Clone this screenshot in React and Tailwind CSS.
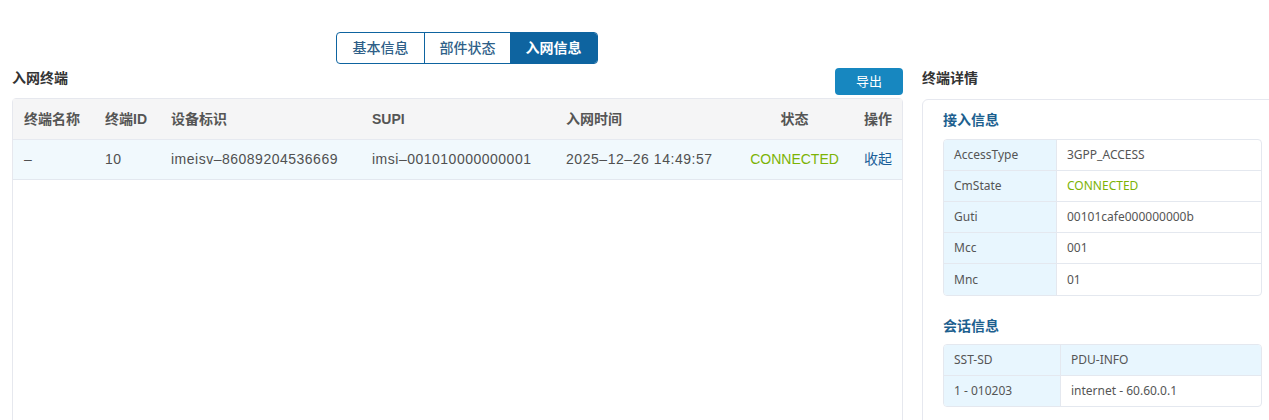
const cols = 'grid grid-cols-[81px_66px_201px_194px_182px_115px_52px]';

const accessInfo = [
  ['AccessType', '3GPP_ACCESS'],
  ['CmState', 'CONNECTED'],
  ['Guti', '00101cafe000000000b'],
  ['Mcc', '001'],
  ['Mnc', '01'],
];

function Tabs() {
  const tabs = ['基本信息', '部件状态', '入网信息'];
  return (
    <div className="flex h-8 ml-[336px] w-fit rounded border border-[#0e64a0] overflow-hidden">
      {tabs.map((t, i) => (
        <div
          key={t}
          className={`flex items-center justify-center text-[14px] ${i === 0 ? 'w-[87px]' : i === 1 ? 'w-[86px] border-l border-[#0e64a0]' : 'w-[87px]'} ${
            i === 2 ? 'bg-[#0e64a0] text-white font-bold' : 'text-[#2f5f88] font-medium'
          }`}
        >
          {t}
        </div>
      ))}
    </div>
  );
}

function TerminalTable() {
  return (
    <div className="h-[340px] rounded-t border border-[#e6e8ee] bg-white">
      <div className={`${cols} h-[41px] items-center bg-[#f5f5f6] border-b border-[#e6e9f0] text-[14px] font-semibold text-[#555]`}>
        <div className="pl-[11px]">终端名称</div>
        <div className="pl-[11px]">终端ID</div>
        <div className="pl-[11px]">设备标识</div>
        <div className="pl-[11px]">SUPI</div>
        <div className="pl-[11px]">入网时间</div>
        <div className="text-center">状态</div>
        <div className="text-center">操作</div>
      </div>
      <div className={`${cols} h-[40px] items-center bg-[#f1f9fd] border-b border-[#e3e8ef] text-[14px] text-[#505050]`}>
        <div className="pl-[11px]">–</div>
        <div className="pl-[11px] tracking-[0.5px]">10</div>
        <div className="pl-[11px] tracking-[0.5px]">imeisv–86089204536669</div>
        <div className="pl-[11px] tracking-[0.5px]">imsi–001010000000001</div>
        <div className="pl-[11px] tracking-[0.55px]">2025–12–26 14:49:57</div>
        <div className="text-center text-[#7cb305]">CONNECTED</div>
        <div className="text-center text-[#1a5f99]">收起</div>
      </div>
    </div>
  );
}

function DetailTable({ rows }) {
  return (
    <div className="rounded border border-[#e4e8ef] overflow-hidden text-[12px] text-[#555] font-['Noto_Sans','Noto_Sans_CJK_SC',sans-serif]">
      {rows.map(([k, v], i) => (
        <div key={k} className={`grid grid-cols-[113px_1fr] h-[31px] ${i < rows.length - 1 ? 'border-b border-[#e4e8ef]' : ''}`}>
          <div className="flex items-center pl-[10px] bg-[#e8f6fe] border-r border-[#e4e8ef]">{k}</div>
          <div className={`flex items-center pl-[10px] ${k === 'CmState' ? 'text-[#7cb305]' : ''}`}>{v}</div>
        </div>
      ))}
    </div>
  );
}

export default function App() {
  return (
    <div className="w-[1269px] h-[420px] overflow-hidden bg-white font-['Liberation_Sans','Noto_Sans_CJK_SC',sans-serif] text-[#333]">
      <div className="pt-8">
        <Tabs />
      </div>
      <div className="flex gap-[19px] pl-3 pt-1">
        <div className="w-[891px] shrink-0">
          <div className="flex justify-between items-start h-[30px]">
            <div className="mt-[1px] leading-[18px] text-[14px] font-bold text-[#333]">入网终端</div>
            <button className="h-[27px] w-[68px] rounded bg-[#1787c0] text-white text-[13px]">导出</button>
          </div>
          <TerminalTable />
        </div>
        <div className="w-[360px] shrink-0">
          <div className="h-[30px]">
            <div className="mt-[1px] leading-[18px] text-[14px] font-bold text-[#333]">终端详情</div>
          </div>
          <div className="h-[340px] rounded-md border border-[#e6e8ef] pl-[20px] pr-[19px]">
            <div className="pt-[10px] leading-[20px] mb-[9px] text-[14px] font-bold text-[#1d5f8f]">接入信息</div>
            <DetailTable rows={accessInfo} />
            <div className="mt-[20px] leading-[20px] mb-[8px] text-[14px] font-bold text-[#1d5f8f]">会话信息</div>
            <div className="rounded border border-[#e4e8ef] overflow-hidden text-[12px] text-[#555] font-['Noto_Sans','Noto_Sans_CJK_SC',sans-serif]">
              <div className="grid grid-cols-[117px_1fr] h-[31px] bg-[#e8f6fe] border-b border-[#e4e8ef]">
                <div className="flex items-center pl-[10px] border-r border-[#e4e8ef]">SST-SD</div>
                <div className="flex items-center pl-[10px]">PDU-INFO</div>
              </div>
              <div className="grid grid-cols-[117px_1fr] h-[30px]">
                <div className="flex items-center pl-[10px] bg-[#e8f6fe] border-r border-[#e4e8ef]">1 - 010203</div>
                <div className="flex items-center pl-[10px]">internet - 60.60.0.1</div>
              </div>
            </div>
          </div>
        </div>
      </div>
    </div>
  );
}
